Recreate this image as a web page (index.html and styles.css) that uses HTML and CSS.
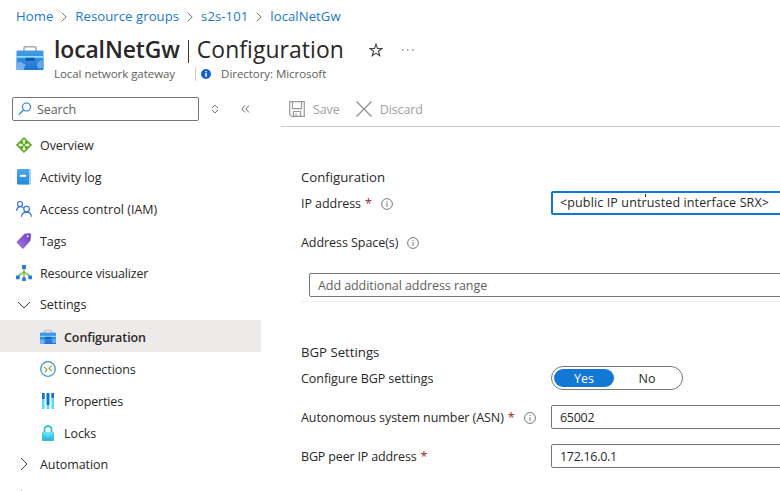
FILE: index.html
```html
<!DOCTYPE html>
<html lang="en">
<head>
<meta charset="utf-8">
<title>localNetGw | Configuration</title>
<link rel="stylesheet" href="styles.css">
</head>
<body>
<svg width="0" height="0" class="defs" aria-hidden="true">
  <defs>
    <linearGradient id="blue" x1="0" y1="0" x2="0" y2="1"><stop offset="0" stop-color="#4a9ce8"/><stop offset="1" stop-color="#1a75d4"/></linearGradient>
    <linearGradient id="book" x1="0" y1="0" x2="0" y2="1"><stop offset="0" stop-color="#4da9ea"/><stop offset="1" stop-color="#2389dc"/></linearGradient>
    <linearGradient id="purple" x1="1" y1="0" x2="0" y2="1"><stop offset="0" stop-color="#6f3bbd"/><stop offset="1" stop-color="#a67ae0"/></linearGradient>
    <linearGradient id="cyan" x1="0" y1="0" x2="0" y2="1"><stop offset="0" stop-color="#55dcf5"/><stop offset="1" stop-color="#2db3d2"/></linearGradient>
    <symbol id="toolbox" viewBox="0 0 27 24">
      <path d="M7.5 5V2q0-1.2 1.2-1.2h9.6q1.2 0 1.2 1.2v3" fill="none" stroke="#a9a9a9" stroke-width="1.5"/>
      <path d="M0 5.5q0-1 1-1h25q1 0 1 1V23q0 1-1 1H1q-1 0-1-1z" fill="url(#blue)"/>
      <path d="M0 10h27v1.800H0z" fill="#83e4f8"/><path d="M9 11.800h9v3H9z" fill="#12549e"/>
      <path d="M0 17l3-1.500 6 3-2 5.500H0z" fill="#75b3ef"/><path d="M27 14.500c-7-1-8 6-4.500 8.200l4.500-.7z" fill="#62a6ec"/>
    </symbol>
    <symbol id="info" viewBox="0 0 12 12"><circle cx="6" cy="6" r="5.400" fill="none" stroke="#777" stroke-width="1"/><path d="M6 5v4M6 2.900v1.100" stroke="#777" stroke-width="1"/></symbol>
    <symbol id="sep" viewBox="0 0 6 10"><path d="M.7.700L5.200 5 .7 9.300" fill="none" stroke="#777" stroke-width="1"/></symbol>
  </defs>
</svg>
<header>
  <nav class="crumbs">
    <a>Home</a><svg class="sep"><use href="#sep"/></svg><a>Resource groups</a><svg class="sep"><use href="#sep"/></svg><a>s2s-101</a><svg class="sep"><use href="#sep"/></svg><a>localNetGw</a>
  </nav>
  <div class="heading">
    <svg class="logo"><use href="#toolbox"/></svg>
    <div class="titles">
      <div class="title-row">
        <h1><b>localNetGw</b><i></i><span>Configuration</span></h1>
        <svg class="star" viewBox="0 0 14 14"><path d="M7 1.200l1.500 4.200 4.500.1-3.500 2.700 1.200 4.500L7 10.100l-3.700 2.600 1.200-4.500L1 5.500l4.500-.1z" fill="none" stroke="#444" stroke-width="1.100"/></svg>
        <svg class="dots" viewBox="0 0 12 2"><path d="M0 .5h1.500v1H0zM5 .5h1.500v1H5zM10 .5h1.500v1H10z" fill="#555"/></svg>
      </div>
      <div class="subtitle"><span>Local network gateway</span><span class="bar"></span>
        <svg class="badge" viewBox="0 0 10 10"><circle cx="5" cy="5" r="5" fill="#155fd4"/><path d="M5 4v3.700M5 2v1.200" stroke="#fff" stroke-width="1.500"/></svg><span>Directory: Microsoft</span></div>
    </div>
  </div>
</header>
<div class="body">
  <aside>
    <div class="search-row">
      <div class="search"><svg width="14" height="14" viewBox="0 0 14 14"><circle cx="8.500" cy="5" r="4" fill="none" stroke="#1b7bd2" stroke-width="1.100"/><path d="M5.600 7.900L.8 12.700" stroke="#1b7bd2" stroke-width="1.200"/></svg><span>Search</span></div>
      <svg class="updown" viewBox="0 0 8 10"><path d="M1 4l3-3 3 3M1 6l3 3 3-3" fill="none" stroke="#777"/></svg>
      <svg class="collapse" viewBox="0 0 9 8"><path d="M4 .5L.8 4 4 7.500M8 .5L4.800 4 8 7.500" fill="none" stroke="#666"/></svg>
    </div>
    <ul>
      <li><svg viewBox="0 0 16 16"><path d="M8 .2L15.800 8 8 15.800.2 8z" fill="#5ea527" stroke="#5ea527" stroke-linejoin="round" stroke-width=".5"/><path d="M8 2l2.200 2.600H8.900V7h2.300V5.700L13.900 8l-2.700 2.300V9H8.900v2.400h1.300L8 14l-2.200-2.600h1.300V9H4.800v1.300L2.100 8l2.700-2.300V7h2.300V4.600H5.800z" fill="#e1f3cd"/><circle cx="8" cy="8" r="1.300" fill="#5ea527"/></svg><span>Overview</span></li>
      <li><svg viewBox="0 0 16 16"><path d="M1 1.500Q1 0 2.500 0H14q1 0 1 1v13.500q0 1-1 1H2.500Q1 15.500 1 14z" fill="#a9d0ed"/><path d="M1 1.500Q1 0 2.500 0H13v15.500H2.500Q1 15.500 1 14z" fill="url(#book)"/><path d="M4 5.800h6v2H4z" fill="#fff"/></svg><span>Activity log</span></li>
      <li><svg viewBox="0 0 16 16" fill="none" stroke="#286fd2" stroke-width="1.150"><circle cx="4" cy="3" r="2.500"/><path d="M.6 9.700C.8 5.300 6.500 4.500 7.400 7.300"/><circle cx="10.600" cy="8" r="2.800"/><path d="M5.400 15.800c.7-6.300 9.500-6.300 10 0"/></svg><span class="iam">Access control (IAM)</span></li>
      <li><svg viewBox="0 0 16 16"><path d="M1 8.500L8.500.8 14 .2l1 1-.4 6.300L7.500 15.500q-.6.500-1.200 0L1 10q-.6-.7 0-1.500z" fill="url(#purple)"/><circle cx="11.700" cy="3.200" r="1.100" fill="#e4d5fa"/></svg><span>Tags</span></li>
      <li><svg viewBox="0 0 16 16"><path d="M8 4v9M2.500 12C2.500 8 8 9.500 8 6c0 3.500 5.500 2 5.500 6" fill="none" stroke="#83bf52" stroke-width="1.500"/><path d="M6 0h4v4H6zM0 10.500h3.800v3.800H0zM6.100 12.500h3.800v3.500H6.100zM12.200 10.500H16v3.800h-3.800z" fill="#297fd6"/></svg><span class="visualizer">Resource visualizer</span></li>
      <li class="group"><svg viewBox="0 0 16 16"><path d="M2 5l6 6 6-6" fill="none" stroke="#444"/></svg><span class="settings">Settings</span></li>
      <li class="child active"><svg><use href="#toolbox"/></svg><b>Configuration</b></li>
      <li class="child"><svg viewBox="0 0 16 16"><circle cx="8" cy="8" r="7.300" fill="#fff" stroke="#358bd9" stroke-width="1.200"/><path d="M4.200 6l2.800 2.700L4.800 11.500M11.800 4.800L9 7.400l2.800 2.800" fill="none" stroke="#77b83d" stroke-width="1.200"/></svg><span>Connections</span></li>
      <li class="child"><svg viewBox="0 0 16 16"><path d="M2 0h2.600v16H2zM6.600 0h2.800v16H6.600zM11.400 0H14v16h-2.600z" fill="#57dcf5"/><path d="M2 0h2.600v6H2zM6.600 0h2.800v12H6.600zM11.400 0H14v5h-2.600z" fill="#1772c9"/></svg><span class="properties">Properties</span></li>
      <li class="child"><svg viewBox="0 0 16 16"><path d="M4.500 8V4.500a3.500 3.500 0 0 1 7 0V8" fill="none" stroke="#36c5e3" stroke-width="1.900"/><path d="M2 7.500h12V15q0 1-1 1H3q-1 0-1-1z" fill="url(#cyan)"/><path d="M2 7.500l6 4.500 6-4.500z" fill="#5be0f7"/></svg><span>Locks</span></li>
      <li><svg viewBox="0 0 16 16"><path d="M5 2l6 6-6 6" fill="none" stroke="#444"/></svg><span>Automation</span></li>
    </ul>
    <div class="next-group"></div>
  </aside>
  <main>
    <div class="toolbar">
      <svg viewBox="0 0 16 16"><path d="M.7.700h14.600v14.600H2.700L.7 13.300zM3.500.700v7h9v-7M4.500 15.300v-4.800h7v4.800M7 15v-2.500" fill="none" stroke="#999" stroke-width="1.200"/></svg><span>Save</span>
      <svg viewBox="0 0 16 16"><path d="M.5.500l15 15M15.500.5l-15 15" stroke="#8d8d8d" stroke-width="1.200"/></svg><span>Discard</span>
    </div>
    <section>
      <h2>Configuration</h2>
      <div class="field ip"><label><span>IP address</span><em>*</em><svg><use href="#info"/></svg></label><div class="input focus"><span>&lt;public IP untrusted interface SRX&gt;</span></div></div>
      <div class="field space"><label><span>Address Space(s)</span><svg><use href="#info"/></svg></label></div>
      <div class="ranges"><div class="input"><span>Add additional address range</span></div></div>
      <h2 class="bgp">BGP Settings</h2>
      <div class="field yesno"><label><span>Configure BGP settings</span></label><div class="toggle"><span class="on">Yes</span><span>No</span></div></div>
      <div class="field"><label><span>Autonomous system number (ASN)</span><em>*</em><svg><use href="#info"/></svg></label><div class="input"><span class="number">65002</span></div></div>
      <div class="field"><label><span class="peer">BGP peer IP address</span><em>*</em></label><div class="input"><span class="number">172.16.0.1</span></div></div>
    </section>
  </main>
</div>
</body>
</html>
```
FILE: styles.css
```css
* { box-sizing: border-box; }
body { margin: 0; width: 780px; height: 491px; overflow: hidden; background: #fff; color: #292827; font: 12.5px/16px "Open Sans", "Noto Sans", sans-serif; }
.defs { position: absolute; }
svg { flex: none; display: block; }
span, b, a { white-space: nowrap; }
header { height: 91px; padding-top: 8px; }
.crumbs { display: flex; align-items: center; height: 16px; padding-left: 16px; color: #1879cf; font-size: 13.1px; letter-spacing: 0.08px; }
.sep { width: 6px; height: 10px; margin: 1px 8px 0; }
.heading { display: flex; padding: 8px 0 0 16px; }
.logo { width: 28px; height: 24px; margin-top: 14px; }
.titles { padding-left: 10px; }
.title-row { display: flex; align-items: center; height: 36px; }
h1 { display: flex; align-items: center; margin: 0; font-size: 22.9px; font-weight: 400; line-height: 36px; }
h1 b { font-weight: 600; letter-spacing: -0.1px; }
h1 i { width: 1px; height: 23px; margin: 2px 8px 0; background: #4b3030; }
h1 span { letter-spacing: 0.08px; }
.star { width: 14px; height: 14px; margin-left: 25px; }
.dots { width: 12px; height: 2px; margin-left: 19px; }
.subtitle { display: flex; align-items: center; height: 14px; margin-top: -1px; font-size: 11.5px; letter-spacing: -0.05px; color: #605e5c; }
.bar { width: 1px; height: 14px; margin: 0 5px 0 20px; background: #ccc; }
.badge { width: 10px; height: 10px; margin-right: 10px; }
.body { display: flex; height: 400px; }
aside { width: 281px; flex: none; }
.search-row { display: flex; align-items: center; height: 38px; padding: 0 0 2px 12px; }
.search { display: flex; align-items: center; width: 187px; height: 24px; padding-left: 5px; border: 1px solid #777; border-radius: 2px; color: #605e5c; letter-spacing: -0.1px; }
.search span { margin: 2px 0 0 5px; }
.updown { width: 8px; height: 10px; margin-left: 12px; }
.collapse { width: 9px; height: 8px; margin-left: 22px; }
ul { list-style: none; margin: 0; padding: 0; width: 261px; letter-spacing: -0.08px; }
li { display: flex; align-items: center; height: 32px; padding-left: 16px; }
li svg { width: 16px; height: 16px; margin-right: 8px; }
li span, li b { padding-top: 2px; }
.iam { letter-spacing: 0.03px; }
.visualizer { letter-spacing: -0.17px; }
.properties { letter-spacing: -0.15px; }
.group { height: 31px; }
.group .settings { padding-top: 1px; letter-spacing: 0; }
.child { padding: 2px 0 0 40px; }
.active { background: #edebe9; }
.active b { font-weight: 600; }
.next-group { width: 1px; height: 1px; margin: 10px 0 0 21px; background: #aaa; }
main { flex: 1; min-width: 0; }
.toolbar { display: flex; align-items: center; height: 36px; padding-left: 8px; border-bottom: 1px solid #ccc; color: #a19f9d; letter-spacing: -0.1px; }
.toolbar svg { width: 16px; height: 16px; }
.toolbar span { margin: 2px 16px 0 8px; }
section { padding: 38px 0 0 20px; }
h2 { height: 24px; margin: 0; font-size: 13.2px; font-weight: 400; line-height: 24px; }
.field { display: flex; align-items: center; height: 24px; margin-bottom: 15px; }
.field label { display: flex; align-items: center; flex: none; width: 250px; letter-spacing: -0.06px; }
label span, label em, .input span { padding-top: 2px; }
.field .peer { letter-spacing: -0.16px; }
em { color: #a4262c; font-style: normal; margin-left: 4px; }
label svg { width: 12px; height: 12px; margin: 2px 0 0 9px; }
.input { display: flex; align-items: center; flex: none; width: 260px; height: 24px; padding: 0 8px; border: 1px solid #777; border-radius: 2px; }
.focus { position: relative; border: 2px solid #1476d4; padding-left: 7px; font-weight: 500; letter-spacing: 0.13px; }
.focus span { padding: 0; }
.focus::after { content: ""; position: absolute; left: 92px; top: 1px; width: 1px; height: 3px; background: #333; }
.space { margin-bottom: 8px; }
.ip { margin-top: 2px; }
.ranges { height: 40px; padding: 11px 0 0 8px; border-bottom: 1px solid #f0efee; letter-spacing: -0.07px; }
.ranges .input { width: 500px; color: #605e5c; }
.bgp { margin-top: 38px; }
.yesno { margin-top: 2px; }
.number { letter-spacing: -0.3px; }
.toggle { display: flex; align-items: center; width: 132px; height: 24px; padding: 2px; border: 1px solid #777; border-radius: 12px; }
.toggle span { width: 68px; padding-top: 1px; text-align: center; line-height: 17px; }
.toggle .on { width: 62px; border-radius: 9px; background: #1278d4; color: #fff; }
```
